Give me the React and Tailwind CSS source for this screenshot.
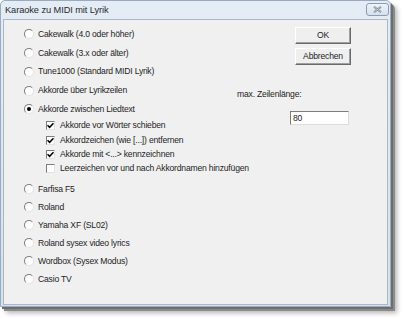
const font = { fontFamily: '"Liberation Sans", Arial, sans-serif' }

function Radio({ label, checked, tall }) {
    return (
        <div className={`flex items-center ${tall ? 'h-[18.75px]' : 'h-[18px]'}`}>
            <span className="flex h-[10px] w-[10px] shrink-0 items-center justify-center rounded-full border border-t-[#7c7c7c] border-l-[#7c7c7c] border-b-[#e2e2e2] border-r-[#e2e2e2] bg-white">
                {checked && <span className="h-[4px] w-[4px] rounded-full bg-black" />}
            </span>
            <span className="ml-[4px] whitespace-nowrap">{label}</span>
        </div>
    )
}

function Check({ label, checked }) {
    return (
        <div className="flex h-[14.33px] items-center pl-[22px]">
            <span className="flex h-[9px] w-[9px] shrink-0 items-center justify-center border border-t-[#7c7c7c] border-l-[#7c7c7c] border-b-[#e2e2e2] border-r-[#e2e2e2] bg-white">
                {checked && (
                    <svg width="7" height="7" viewBox="0 0 7 7">
                        <path d="M0.5 3.2 L2.6 5.3 L6.5 1.2" stroke="#000" strokeWidth="1.6" fill="none" />
                    </svg>
                )}
            </span>
            <span className="ml-[5px] whitespace-nowrap">{label}</span>
        </div>
    )
}

function Button({ children, className }) {
    return (
        <div
            className={`flex h-[17px] w-[56px] items-center justify-center border border-t-white border-l-white border-b-[#6a6a6a] border-r-[#6a6a6a] bg-[#efefef] shadow-[inset_-1px_-1px_0_#a0a0a0] ${className}`}
        >
            {children}
        </div>
    )
}

export default function App() {
    return (
        <div className="h-[319px] w-[403px] overflow-hidden bg-white" style={font}>
            {/*Window frame*/}
            <div className="flex h-[307px] w-[391px] flex-col rounded-t-[5px] border border-[#9aabbf] bg-gradient-to-b from-[#e4ecf6] to-[#d5e1ee] shadow-[2px_2px_0_#6e6e6e,4px_4px_0_#8a8a8a,6px_6px_5px_rgba(0,0,0,0.3)]">
                {/*Title bar*/}
                <div className="flex h-[18px] items-start justify-between pl-[4px] pr-[1px]">
                    <span className="mt-[5px] text-[9.3px] leading-none tracking-[-0.1px] text-[#2a2a2a]">
                        Karaoke zu MIDI mit Lyrik
                    </span>
                    <div className="mt-[2px] flex h-[13px] w-[23px] items-center justify-center rounded-[3px] border border-[#8b9cb2] bg-gradient-to-b from-[#eef3f9] to-[#d6e0ec]">
                        <svg width="9" height="7" viewBox="0 0 9 7">
                            <path d="M1 0.8 L8 6.2 M8 0.8 L1 6.2" stroke="#6f7c8c" strokeWidth="2" />
                            <path d="M1 0.8 L8 6.2 M8 0.8 L1 6.2" stroke="#e8eef5" strokeWidth="0.7" />
                        </svg>
                    </div>
                </div>

                {/*Dialog body*/}
                <div className="mx-[2px] mb-[1px] flex flex-1 border border-[#aab7c6] bg-[#f0f0f0] text-[8.6px] tracking-[-0.2px] text-[#1e1e1e]">
                    {/*Options*/}
                    <div className="w-[233px] shrink-0 pl-[20px] pt-[5px]">
                        <Radio tall label="Cakewalk (4.0 oder höher)" />
                        <Radio tall label="Cakewalk (3.x oder älter)" />
                        <Radio tall label="Tune1000 (Standard MIDI Lyrik)" />
                        <Radio tall label="Akkorde über Lyrikzeilen" />
                        <Radio tall label="Akkorde zwischen Liedtext" checked />
                        <Check label="Akkorde vor Wörter schieben" checked />
                        <Check label="Akkordzeichen (wie [...]) entfernen" checked />
                        <Check label="Akkorde mit <...> kennzeichnen" checked />
                        <Check label="Leerzeichen vor und nach Akkordnamen hinzufügen" />
                        <div className="mt-[4px]">
                            <Radio label="Farfisa F5" />
                            <Radio label="Roland" />
                            <Radio label="Yamaha XF (SL02)" />
                            <Radio label="Roland sysex video lyrics" />
                            <Radio label="Wordbox (Sysex Modus)" />
                            <Radio label="Casio TV" />
                        </div>
                    </div>

                    {/*Buttons and line length*/}
                    <div className="flex flex-col">
                        <Button className="ml-[58px] mt-[7px]">OK</Button>
                        <Button className="ml-[58px] mt-[4px]">Abbrechen</Button>
                        <span className="mt-[24px] whitespace-nowrap leading-[11px]">max. Zeilenlänge:</span>
                        <div className="ml-[53px] mt-[11px] flex h-[14px] w-[59px] items-center border border-t-[#7c7c7c] border-l-[#7c7c7c] border-b-[#dcdcdc] border-r-[#dcdcdc] bg-white pl-[2px]">
                            80
                        </div>
                    </div>
                </div>
            </div>
        </div>
    )
}
